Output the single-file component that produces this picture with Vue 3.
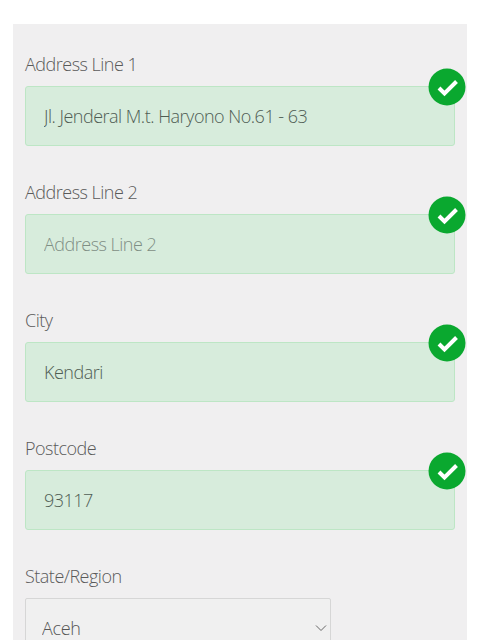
<template>
  <div class="page">
    <form class="panel">
      <div v-for="field in fields" :key="field.label" class="field">
        <label class="label">{{ field.label }}</label>
        <div class="control">
          <input class="input" type="text" :value="field.value" :placeholder="field.label" />
          <span class="badge">
            <svg viewBox="0 0 38 38" width="38" height="38">
              <circle cx="19" cy="19" r="18.5" fill="#0aa82f" />
              <path d="M11 20 L16.5 25.5 L28.5 13.5" fill="none" stroke="#fff" stroke-width="4" />
            </svg>
          </span>
        </div>
      </div>

      <div class="field">
        <label class="label">State/Region</label>
        <div class="select-wrap">
          <select class="select">
            <option>Aceh</option>
          </select>
          <svg class="chevron" viewBox="0 0 12 8" width="12" height="8">
            <path d="M1 1.5 L6 6.5 L11 1.5" fill="none" stroke="#666" stroke-width="1" />
          </svg>
        </div>
      </div>
    </form>
  </div>
</template>

<script setup>
const fields = [
  { label: 'Address Line 1', value: 'Jl. Jenderal M.t. Haryono No.61 - 63' },
  { label: 'Address Line 2', value: '' },
  { label: 'City', value: 'Kendari' },
  { label: 'Postcode', value: '93117' },
]
</script>

<style>
html, body {
  background: #fff;
  overflow: hidden;
}
</style>

<style scoped>
.page {
  height: 640px;
  padding: 24px 13px 0;
  box-sizing: border-box;
  overflow: hidden;
  font-family: "Open Sans", Lato, sans-serif;
}

.panel {
  background: #f0eff0;
  padding: 28px 12px 0;
  height: 616px;
  box-sizing: border-box;
}

.field {
  margin-bottom: 34px;
}

.label {
  display: block;
  height: 34px;
  line-height: 24px;
  font-size: 18px;
  font-weight: 300;
  letter-spacing: -0.5px;
  color: #5a5a5a;
}

.control {
  position: relative;
}

.input {
  display: block;
  width: 100%;
  height: 60px;
  box-sizing: border-box;
  padding: 0 18px;
  border: 1px solid #bde6c5;
  border-radius: 3px;
  background: #d7ecdc;
  font-family: inherit;
  font-size: 18px;
  font-weight: 300;
  letter-spacing: -0.5px;
  color: #4f5d54;
  outline: none;
}

.input::placeholder {
  color: #7f8e84;
  opacity: 1;
}

.badge {
  position: absolute;
  top: -18px;
  right: -11px;
  width: 38px;
  height: 38px;
}

.badge svg {
  display: block;
}

.select-wrap {
  position: relative;
  width: 306px;
}

.select {
  display: block;
  width: 100%;
  height: 60px;
  box-sizing: border-box;
  padding: 0 16px;
  border: 1px solid #d6d6d6;
  border-radius: 2px;
  background: #f0f0f0;
  appearance: none;
  font-family: inherit;
  font-size: 18px;
  font-weight: 300;
  letter-spacing: -0.3px;
  color: #555;
}

.chevron {
  position: absolute;
  top: 26px;
  right: 4px;
}
</style>
